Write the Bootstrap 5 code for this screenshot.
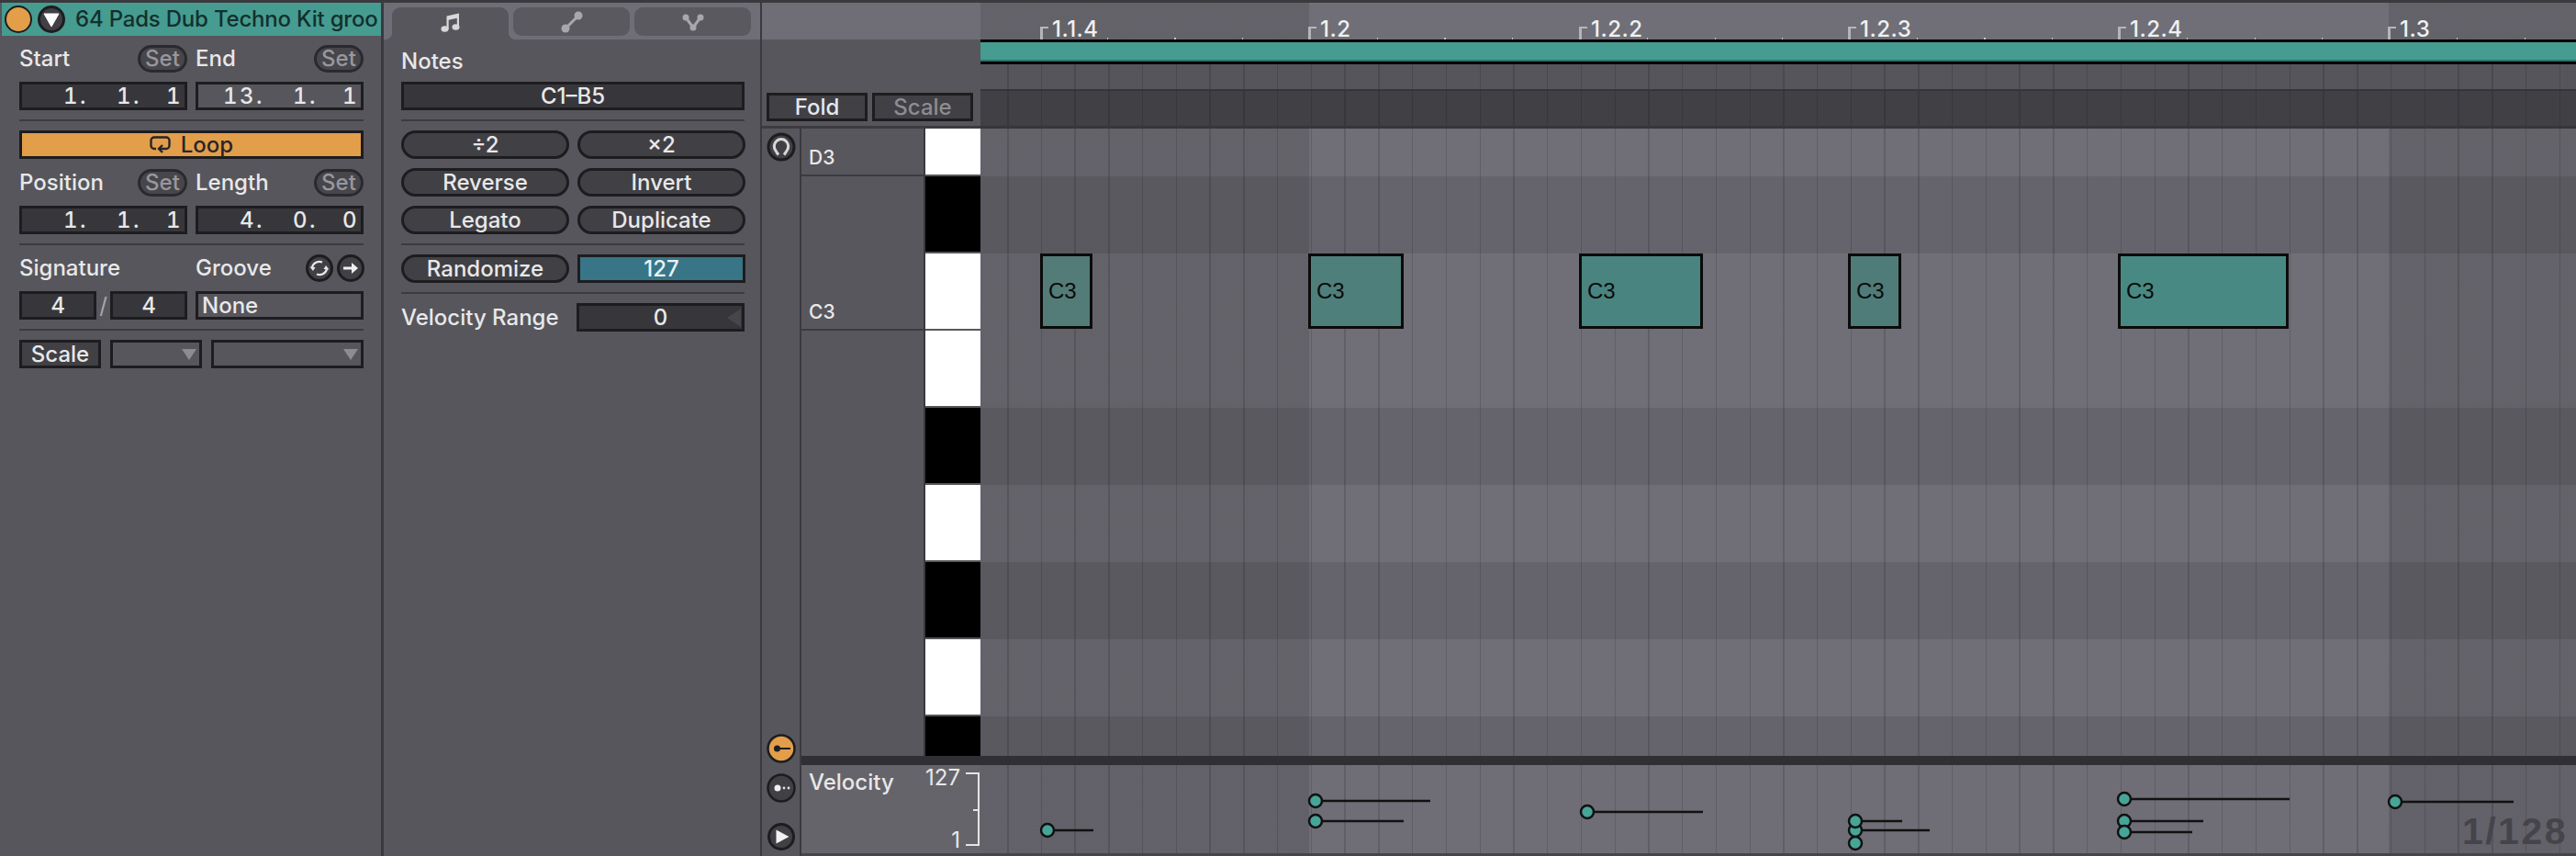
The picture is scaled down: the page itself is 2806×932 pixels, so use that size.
<!DOCTYPE html>
<html lang="en">
<head>
  <meta charset="UTF-8" />
  <title>Clip View</title>
  <link rel="stylesheet" href="https://cdn.jsdelivr.net/npm/bootstrap@5.3.0/dist/css/bootstrap.min.css" />
  <script src="https://cdn.jsdelivr.net/npm/bootstrap@5.3.3/dist/js/bootstrap.bundle.min.js"></script>
  <style>
    :root {
      --shade: rgba(0, 0, 0, 0.115);
      --line: rgba(0, 0, 0, 0.14);
      --edge: #3a3a3e;
      --panel: #57565c;
      --well: #37363b;
      --rim: #1d1d20;
    }
    html, body { height: 100%; }
    body {
      width: 2806px;
      height: 932px;
      overflow: hidden;
      background: var(--edge);
      padding-top: 3px;
      font-family: Inter, "Open Sans", sans-serif;
      font-size: 24px;
      font-weight: 500;
      line-height: 1;
      color: #e8e8e8;
    }
    .app-shell { height: 929px; }

    /* left clip box */
    .clip-panel {
      width: 418px;
      padding-left: 2px;
      border-right: 3px solid var(--edge);
      background: var(--panel);
      flex: none;
    }
    .clip-title {
      height: 36px;
      background: #469c91;
      color: #13302d;
      white-space: nowrap;
      overflow: hidden;
      padding-left: 3px;
      gap: 6px;
    }
    .clip-title-text { margin-left: 5px; letter-spacing: -0.2px; }
    .panel-col { gap: 10px; padding: 10px 19px 0; }
    .notes-col { padding: 6px 17px 0 19px; }
    .pair { display: flex; gap: 9px; }
    .half { width: 183px; flex: none; }
    .label-row { height: 31px; }
    .label-row.tall { height: 30px; }
    .notes-label { padding-top: 6px; }
    .rule { height: 2px; background: #3c3b40; flex: none; }

    .pill-btn {
      --bs-btn-padding-x: 0;
      --bs-btn-padding-y: 0;
      --bs-btn-font-size: 24px;
      --bs-btn-font-weight: 500;
      --bs-btn-line-height: 1;
      --bs-btn-color: #e8e8e8;
      --bs-btn-bg: #414045;
      --bs-btn-border-color: var(--rim);
      --bs-btn-border-width: 3px;
      --bs-btn-border-radius: 16px;
      height: 31px;
      flex: none;
    }
    .set-btn {
      width: 54px;
      height: 30px;
      --bs-btn-color: #98979d;
      --bs-btn-bg: #47464b;
      --bs-btn-border-color: #2a2a2e;
    }
    .num-box {
      height: 31px;
      background: var(--well);
      border: 3px solid var(--rim);
      flex: none;
    }
    .num-box.flat { background: var(--panel); }
    .sig-box { width: 84px; }
    .bar-value { justify-content: flex-end; padding-right: 2px; letter-spacing: 2.5px; font-variant-numeric: tabular-nums; }
    .bar-value span { text-align: right; display: block; }
    .bar-value .seg-a { width: 58px; }
    .bar-value .seg-b { width: 45px; }
    .square-btn {
      height: 31px;
      background: #414045;
      border: 3px solid var(--rim);
    }
    .loop-btn { background: #e39e4a; color: #26262a; gap: 11px; }
    .slash { width: 15px; text-align: center; color: #aaa; font-weight: 400; }
    .scale-row { display: flex; gap: 10px; }
    .scale-btn { width: 89px; }
    .drop-box { height: 31px; border: 3px solid var(--rim); background: var(--panel); padding-right: 3px; }
    .drop-short { width: 100px; }
    .drop-long { width: 166px; }
    .tri-down { width: 0; height: 0; border-left: 8px solid transparent; border-right: 8px solid transparent; border-top: 12px solid #8d8c92; }
    .tri-left { width: 0; height: 0; border-top: 10px solid transparent; border-bottom: 10px solid transparent; border-right: 15px solid #47464b; position: absolute; right: 1px; top: 3px; }
    .round-icon { width: 30px; height: 30px; flex: none; display: block; }
    .groove-icons { margin-right: -1px; }
    .value-teal { background: #387587; color: #e8f2f4; }

    /* device tabs */
    .notes-panel { width: 412px; flex: none; border-right: 2px solid var(--edge); background: var(--panel); }
    .tab-strip { height: 40px; background: #6f6e76; padding: 5px 0 0 9px; gap: 5px; }
    .tab-pill { width: 127px; height: 31px; background: #5a595f; border-radius: 9px; }
    .tab-pill.active { height: 35px; background: var(--panel); border-radius: 9px 9px 0 0; position: relative; padding-bottom: 4px; }
    .tab-pill.active::before,
    .tab-pill.active::after {
      content: "";
      position: absolute;
      bottom: 0;
      width: 8px;
      height: 8px;
    }
    .tab-pill.active::before { left: -8px; background: radial-gradient(circle at 0 0, transparent 8px, var(--panel) 8.5px); }
    .tab-pill.active::after { right: -8px; background: radial-gradient(circle at 100% 0, transparent 8px, var(--panel) 8.5px); }

    /* editor */
    .key-side { width: 238px; flex: none; background: var(--panel); }
    .key-top { height: 40px; background: #6f6e76; flex: none; }
    .fold-area { height: 94px; padding: 0 8px 5px 5px; gap: 5px; flex: none; }
    .fold-btn { width: 110px; flex: none; }
    .fold-btn.dim { color: #8d8c92; }
    .side-rule { height: 3px; background: #3c3b40; flex: none; }
    .icon-col { width: 43px; flex: none; border-right: 2px solid var(--edge); padding: 4px 0 6px; }
    .icon-big { width: 32px; height: 32px; display: block; flex: none; }
    .icon-gap { margin-top: 11px; }
    .play-gap { margin-top: 22px; }
    .roll-head { height: 683px; flex: none; }
    .name-col { width: 135px; flex: none; background: #58575d; border-right: 2px solid var(--edge); font-size: 21px; }
    .name-cell { border-bottom: 2px solid #3c3b40; padding: 0 0 8px 8px; }
    .name-d3 { height: 52px; }
    .name-c3 { height: 168px; }
    .keys-col { flex: 1 1 auto; background: #57565c; }
    .piano-key { height: 82px; margin-bottom: 2px; background: #fff; flex: none; }
    .piano-key.ebony { background: #000; }
    .piano-key.first { height: 50px; }
    .piano-key.last { height: 43px; margin-bottom: 0; }
    .splitter { height: 10px; background: #302f33; flex: none; }
    .vel-head { height: 96px; background: #65646b; flex: none; padding: 8px 1px 8px 8px; }
    .vel-title { margin-top: -1px; }
    .vel-range { font-weight: 400; text-align: right; margin: -6px 0; padding: 0 6px 0 0; }
    .vel-bracket { width: 15px; border: 2px solid #e4e4e6; border-left: 0; position: relative; }
    .vel-bracket::after { content: ""; position: absolute; left: 8px; right: 0; top: 50%; height: 2px; background: #e4e4e6; }
    .bottom-line { height: 3px; background: #46454a; flex: none; }

    /* timeline */
    .timeline { width: 1738px; flex: none; overflow: hidden; }
    .beat-shade {
      background-image:
        repeating-linear-gradient(90deg, transparent -6.25px, transparent 29px, var(--line) 29px, var(--line) 30.5px),
        linear-gradient(90deg, var(--shade) 358px, transparent 358px, transparent 1534px, var(--shade) 1534px);
    }
    .beat-plain {
      background-image: repeating-linear-gradient(90deg, transparent -6.25px, transparent 29px, var(--line) 29px, var(--line) 30.5px);
    }
    .ruler {
      height: 40px;
      flex: none;
      background-color: #706f77;
      background-image: linear-gradient(90deg, var(--shade) 358px, transparent 358px, transparent 1534px, var(--shade) 1534px);
    }
    .ruler-dots {
      position: absolute;
      left: 0;
      right: 0;
      bottom: 0;
      height: 2px;
      background-image: repeating-linear-gradient(90deg, transparent -7.5px, transparent 64.5px, #c9c9cc 64.5px, #c9c9cc 66px);
    }
    .ruler-mark { position: absolute; top: 26px; bottom: 0; width: 10px; border-left: 3px solid #b5b5b9; }
    .ruler-mark::before { content: ""; position: absolute; left: 0; top: 0; width: 6px; height: 2px; background: #b5b5b9; }
    .ruler-text { position: absolute; top: -9px; left: 10px; color: #f0f0f2; letter-spacing: 0.5px; white-space: nowrap; }
    .clip-bar { height: 27px; background: #469c91; border-top: 3px solid #000; border-bottom: 3px solid #000; box-shadow: inset 0 -2px 0 #2f7068; flex: none; }
    .top-strip { height: 27px; background-color: #56555b; flex: none; }
    .dark-strip { height: 43px; background-color: #414045; border-top: 2px solid #363539; border-bottom: 3px solid #363539; flex: none; }
    .roll-lanes { height: 683px; flex: none; }
    .lane { height: 84px; flex: none; background-color: #706f77; }
    .lane.sunk { background-color: #65646c; }
    .lane.first { height: 52px; }
    .lane.last { height: 43px; }
    .midi-note {
      position: absolute;
      top: 136px;
      height: 82px;
      border: 3px solid #0b0b0b;
      color: #0b0b0b;
      font-family: "Liberation Sans", sans-serif;
      font-weight: 400;
      padding-left: 6px;
      display: flex;
      align-items: center;
    }
    .vel-lane { height: 96px; background-color: #6f6e76; flex: none; position: relative; }
    .vel-dots { position: absolute; left: 0; top: 0; }
    .grid-label { position: absolute; right: 9px; bottom: 9px; color: #45444a; font-family: "Liberation Sans", sans-serif; font-weight: 700; font-size: 41px; letter-spacing: 2.5px; line-height: 30px; }
  </style>
</head>
<body>
  <div class="app-shell d-flex">
    <!-- Clip box -->
    <div class="clip-panel d-flex flex-column">
      <div class="clip-title d-flex align-items-center">
        <svg class="round-icon" viewBox="0 0 30 30"><circle cx="15" cy="15" r="14" fill="#e39e4a" stroke="#1d1d20" stroke-width="2"/></svg>
        <svg class="round-icon" viewBox="0 0 30 30"><circle cx="15" cy="15" r="13.5" fill="#414045" stroke="#1d1d20" stroke-width="3"/><path d="M7 9h16l-8 14z" fill="#fff" stroke="#fff" stroke-linejoin="round"/></svg>
        <span class="clip-title-text">64 Pads Dub Techno Kit groo</span>
      </div>
      <div class="panel-col d-flex flex-column">
        <div class="pair">
          <div class="half label-row tall d-flex align-items-center justify-content-between"><span>Start</span><button class="btn pill-btn set-btn">Set</button></div>
          <div class="half label-row tall d-flex align-items-center justify-content-between"><span>End</span><button class="btn pill-btn set-btn">Set</button></div>
        </div>
        <div class="pair">
          <div class="half num-box bar-value d-flex align-items-center"><span class="seg-a">1.</span><span class="seg-a">1.</span><span class="seg-b">1</span></div>
          <div class="half num-box flat bar-value d-flex align-items-center"><span class="seg-a">13.</span><span class="seg-a">1.</span><span class="seg-b">1</span></div>
        </div>
        <div class="rule"></div>
        <div class="square-btn loop-btn d-flex align-items-center justify-content-center">
          <svg width="23" height="19" viewBox="0 0 23 19" fill="none" stroke="#26262a" stroke-width="2.4"><path d="M7 14H5a3.500 3.500 0 0 1-3.500-3.500V5A3.500 3.500 0 0 1 5 1.500h13A3.500 3.500 0 0 1 21.500 5v5.500A3.500 3.500 0 0 1 18 14h-7"/><path d="M14 10l-4 4 4 4"/></svg>
          <span>Loop</span>
        </div>
        <div class="pair">
          <div class="half label-row d-flex align-items-center justify-content-between"><span>Position</span><button class="btn pill-btn set-btn">Set</button></div>
          <div class="half label-row d-flex align-items-center justify-content-between"><span>Length</span><button class="btn pill-btn set-btn">Set</button></div>
        </div>
        <div class="pair">
          <div class="half num-box bar-value d-flex align-items-center"><span class="seg-a">1.</span><span class="seg-a">1.</span><span class="seg-b">1</span></div>
          <div class="half num-box bar-value d-flex align-items-center"><span class="seg-a">4.</span><span class="seg-a">0.</span><span class="seg-b">0</span></div>
        </div>
        <div class="rule"></div>
        <div class="pair">
          <div class="half label-row tall d-flex align-items-center"><span>Signature</span></div>
          <div class="half label-row tall d-flex align-items-center justify-content-between">
            <span>Groove</span>
            <span class="groove-icons d-flex gap-1">
              <svg class="round-icon" viewBox="0 0 30 30"><circle cx="15" cy="15" r="13.500" fill="#414045" stroke="#1d1d20" stroke-width="3"/><path d="M7 14a8 8 0 0 1 11-5.500M23 16a8 8 0 0 1-11 5.500" fill="none" stroke="#e8e8e8" stroke-width="2.200"/><path d="M4.500 13.500l6 .5-2.500 4zM25.500 16.500l-6-.5 2.500-4z" fill="#e8e8e8"/></svg>
              <svg class="round-icon" viewBox="0 0 30 30"><circle cx="15" cy="15" r="13.500" fill="#414045" stroke="#1d1d20" stroke-width="3"/><path d="M7 15h13" stroke="#f0f0f0" stroke-width="3"/><path d="M16 9l7 6-7 6z" fill="#f0f0f0"/></svg>
            </span>
          </div>
        </div>
        <div class="pair">
          <div class="half d-flex align-items-center">
            <div class="num-box sig-box d-flex align-items-center justify-content-center">4</div>
            <span class="slash">/</span>
            <div class="num-box sig-box d-flex align-items-center justify-content-center">4</div>
          </div>
          <div class="half num-box flat d-flex align-items-center ps-1">None</div>
        </div>
        <div class="rule"></div>
        <div class="scale-row">
          <div class="square-btn scale-btn d-flex align-items-center justify-content-center">Scale</div>
          <div class="drop-box drop-short d-flex align-items-center justify-content-end"><span class="tri-down"></span></div>
          <div class="drop-box drop-long d-flex align-items-center justify-content-end"><span class="tri-down"></span></div>
        </div>
      </div>
    </div>

    <!-- Notes panel -->
    <div class="notes-panel d-flex flex-column">
      <div class="tab-strip d-flex align-items-start">
        <div class="tab-pill active d-flex align-items-center justify-content-center">
          <svg width="22" height="22" viewBox="0 0 22 22" fill="#d8d8d8"><path d="M6.500 4.500L20 1.500v15h-2.200V6.800L8.700 8.800V19H6.500z"/><ellipse cx="4.500" cy="18.500" rx="4" ry="3.300"/><ellipse cx="16.500" cy="16.500" rx="4" ry="3.300"/></svg>
        </div>
        <div class="tab-pill d-flex align-items-center justify-content-center">
          <svg width="24" height="24" viewBox="0 0 24 24" fill="#a8a8ac"><circle cx="5" cy="19" r="4.500"/><circle cx="19" cy="5" r="4.500"/><path d="M5 19L19 5" stroke="#a8a8ac" stroke-width="3"/></svg>
        </div>
        <div class="tab-pill d-flex align-items-center justify-content-center">
          <svg width="24" height="20" viewBox="0 0 24 20" fill="#a8a8ac"><circle cx="4" cy="5" r="3.500"/><circle cx="20" cy="5" r="3.500"/><circle cx="12" cy="16" r="3.500"/><path d="M4 5l8 11 8-11" fill="none" stroke="#a8a8ac" stroke-width="3"/></svg>
        </div>
      </div>
      <div class="panel-col notes-col d-flex flex-column">
        <div class="label-row tall notes-label d-flex align-items-center">Notes</div>
        <div class="num-box d-flex align-items-center justify-content-center">C1–B5</div>
        <div class="rule"></div>
        <div class="pair justify-content-between">
          <button class="btn pill-btn half">÷2</button>
          <button class="btn pill-btn half">×2</button>
        </div>
        <div class="pair justify-content-between">
          <button class="btn pill-btn half">Reverse</button>
          <button class="btn pill-btn half">Invert</button>
        </div>
        <div class="pair justify-content-between">
          <button class="btn pill-btn half">Legato</button>
          <button class="btn pill-btn half">Duplicate</button>
        </div>
        <div class="rule"></div>
        <div class="pair justify-content-between">
          <button class="btn pill-btn half">Randomize</button>
          <div class="half num-box value-teal d-flex align-items-center justify-content-center">127</div>
        </div>
        <div class="rule"></div>
        <div class="pair justify-content-between align-items-center">
          <span>Velocity Range</span>
          <div class="half num-box position-relative d-flex align-items-center justify-content-center">0<span class="tri-left"></span></div>
        </div>
      </div>
    </div>

    <!-- Key side of the editor -->
    <div class="key-side d-flex flex-column">
      <div class="key-top"></div>
      <div class="fold-area d-flex align-items-end">
        <div class="square-btn fold-btn d-flex align-items-center justify-content-center">Fold</div>
        <div class="square-btn fold-btn dim d-flex align-items-center justify-content-center">Scale</div>
      </div>
      <div class="side-rule"></div>
      <div class="d-flex flex-grow-1">
        <div class="icon-col d-flex flex-column align-items-center">
          <svg class="icon-big" viewBox="0 0 32 32"><circle cx="16" cy="16" r="14" fill="#414045" stroke="#1d1d20" stroke-width="3"/><path d="M13 24.500l-1-1.200-2.200-3.500A7.700 7.700 0 1 1 22.200 19.800L20 23.300l-1 1.200" fill="none" stroke="#d8d8d8" stroke-width="3"/></svg>
          <svg class="icon-big mt-auto" viewBox="0 0 32 32"><circle cx="16" cy="16" r="14.500" fill="#e39e4a" stroke="#1d1d20" stroke-width="2.500"/><circle cx="11.500" cy="16" r="3.500" fill="#1d1d20"/><path d="M11 16h15" stroke="#1d1d20" stroke-width="2"/></svg>
          <svg class="icon-big icon-gap" viewBox="0 0 32 32"><circle cx="16" cy="16" r="14.500" fill="#414045" stroke="#1d1d20" stroke-width="2.500"/><circle cx="12" cy="16" r="3.500" fill="#f0f0f0"/><circle cx="19" cy="16" r="1.400" fill="#e0e0e0"/><circle cx="24" cy="16" r="1.400" fill="#e0e0e0"/></svg>
          <svg class="round-icon play-gap" viewBox="0 0 30 30"><circle cx="15" cy="15" r="13.500" fill="#414045" stroke="#1d1d20" stroke-width="3"/><path d="M9.500 7.500l14 7.500-14 7.500z" fill="#f2f2f2"/></svg>
        </div>
        <div class="d-flex flex-column flex-grow-1">
          <div class="roll-head d-flex">
            <div class="name-col d-flex flex-column">
              <div class="name-cell name-d3 d-flex align-items-end">D3</div>
              <div class="name-cell name-c3 d-flex align-items-end">C3</div>
            </div>
            <div class="keys-col d-flex flex-column">
              <div class="piano-key first"></div>
              <div class="piano-key ebony"></div>
              <div class="piano-key"></div>
              <div class="piano-key"></div>
              <div class="piano-key ebony"></div>
              <div class="piano-key"></div>
              <div class="piano-key ebony"></div>
              <div class="piano-key"></div>
              <div class="piano-key ebony last"></div>
            </div>
          </div>
          <div class="splitter"></div>
          <div class="vel-head d-flex justify-content-between">
            <span class="vel-title">Velocity</span>
            <div class="d-flex">
              <div class="vel-range d-flex flex-column justify-content-between"><span>127</span><span>1</span></div>
              <div class="vel-bracket"></div>
            </div>
          </div>
          <div class="bottom-line"></div>
        </div>
      </div>
    </div>

    <!-- Timeline -->
    <div class="timeline d-flex flex-column">
      <div class="ruler position-relative" id="ruler"><div class="ruler-dots"></div></div>
      <div class="clip-bar"></div>
      <div class="top-strip beat-plain"></div>
      <div class="dark-strip beat-plain"></div>
      <div class="roll-lanes position-relative d-flex flex-column" id="lanes">
        <div class="lane first beat-shade"></div>
        <div class="lane sunk beat-shade"></div>
        <div class="lane beat-shade"></div>
        <div class="lane beat-shade"></div>
        <div class="lane sunk beat-shade"></div>
        <div class="lane beat-shade"></div>
        <div class="lane sunk beat-shade"></div>
        <div class="lane beat-shade"></div>
        <div class="lane sunk last beat-shade"></div>
      </div>
      <div class="splitter"></div>
      <div class="vel-lane beat-shade">
        <svg class="vel-dots" id="velDots" width="1738" height="96"></svg>
        <div class="grid-label">1/128</div>
      </div>
      <div class="bottom-line"></div>
    </div>
  </div>

  <script>
    // x positions are page pixels, the timeline starts at 1068
    const ORIGIN = 1068;

    const marks = [
      { x: 1133, text: "1.1.4" },
      { x: 1425, text: "1.2" },
      { x: 1720, text: "1.2.2" },
      { x: 2013, text: "1.2.3" },
      { x: 2307, text: "1.2.4" },
      { x: 2601, text: "1.3" }
    ];
    const ruler = document.getElementById("ruler");
    marks.forEach((m) => {
      const el = document.createElement("div");
      el.className = "ruler-mark";
      el.style.left = `${m.x - ORIGIN}px`;
      el.innerHTML = `<span class="ruler-text">${m.text}</span>`;
      ruler.appendChild(el);
    });

    const notes = [
      { from: 1133, to: 1190, fill: "#537c79" },
      { from: 1425, to: 1529, fill: "#4f7f7b" },
      { from: 1720, to: 1855, fill: "#4a8480" },
      { from: 2013, to: 2071, fill: "#4f7c79" },
      { from: 2307, to: 2493, fill: "#488a83" }
    ];
    const lanes = document.getElementById("lanes");
    notes.forEach((n) => {
      const el = document.createElement("div");
      el.className = "midi-note";
      el.style.left = `${n.from - ORIGIN}px`;
      el.style.width = `${n.to - n.from}px`;
      el.style.background = n.fill;
      el.textContent = "C3";
      lanes.appendChild(el);
    });

    // velocity stems: x, y, end of the line
    const stems = [
      [1141, 904, 1191], [1433, 872, 1558], [1433, 894, 1529], [1729, 884, 1855],
      [2021, 918, 2021], [2021, 904, 2102], [2021, 894, 2072],
      [2314, 870, 2494], [2314, 894, 2400], [2314, 906, 2388], [2609, 873, 2738]
    ];
    document.getElementById("velDots").innerHTML = stems.map(([x, y, end]) => {
      const cx = x - ORIGIN, cy = y - 833, ex = end - ORIGIN;
      return `<path d="M${cx} ${cy}H${ex}" stroke="#111" stroke-width="2.500"/>` +
        `<circle cx="${cx}" cy="${cy}" r="7" fill="#46a596" stroke="#111" stroke-width="2.500"/>`;
    }).join("");
  </script>
</body>
</html>
